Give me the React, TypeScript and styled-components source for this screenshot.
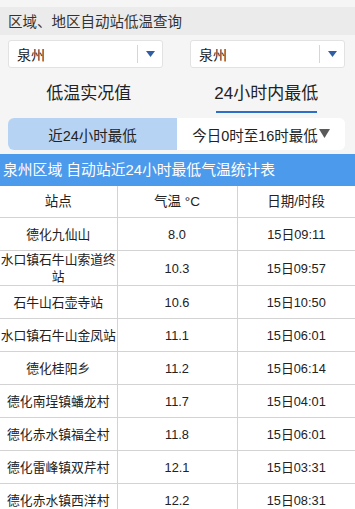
import React from "react";
import styled, { createGlobalStyle } from "styled-components";

const GlobalStyle = createGlobalStyle`
  html, body {
    margin: 0;
    padding: 0;
    background: #f5f5f5;
    font-family: "Liberation Sans", "Noto Sans CJK SC", sans-serif;
    color: #222;
  }
`;

const Page = styled.div`
  width: 355px;
  padding-top: 7px;
`;

const TitleBar = styled.div`
  height: 28px;
  line-height: 30px;
  background: #ebebeb;
  padding-left: 8px;
  font-size: 14.5px;
  color: #333;
`;

const SelectRow = styled.div`
  display: flex;
  justify-content: space-between;
  padding: 5px 10px 0 8px;
`;

const SelectBox = styled.div`
  width: 155px;
  height: 28px;
  box-sizing: border-box;
  background: #fff;
  border: 1px solid #e2e2e2;
  border-radius: 3px;
  display: flex;
  align-items: center;
  font-size: 14px;
  color: #222;
`;

const SelectText = styled.span`
  flex: 1;
  padding-left: 8px;
`;

const SelectDivider = styled.span`
  width: 1px;
  height: 18px;
  background: #d6d6d6;
`;

const SelectArrow = styled.span`
  width: 24px;
  display: flex;
  justify-content: center;
  align-items: center;
`;

const Tabs = styled.div`
  display: flex;
  height: 44px;
  margin-top: 1px;
`;

const Tab = styled.div<{ $active?: boolean }>`
  flex: 1;
  display: flex;
  align-items: center;
  justify-content: center;
  font-size: 17px;
  color: #222;
  position: relative;
  &::after {
    content: "";
    display: ${(p) => (p.$active ? "block" : "none")};
    position: absolute;
    bottom: 0;
    left: 38px;
    width: 101px;
    height: 2px;
    background: #2d6fc7;
  }
`;

const Segment = styled.div`
  display: flex;
  margin: 5px 10px 0 8px;
  height: 32px;
  border-radius: 6px;
  overflow: hidden;
  background: #fff;
`;

const SegItem = styled.div<{ $active?: boolean; $w: number }>`
  width: ${(p) => p.$w}px;
  display: flex;
  align-items: center;
  justify-content: center;
  font-size: 14.5px;
  background: ${(p) => (p.$active ? "#b7d3f4" : "#fff")};
  color: #222;
`;

const Caret = styled.svg`
  margin-left: 1px;
  margin-top: -2px;
`;

const BlueBar = styled.div`
  margin-top: 4px;
  height: 32px;
  line-height: 32px;
  background: #4c9aec;
  color: #fff;
  font-size: 14.8px;
  padding-left: 3px;
  white-space: nowrap;
`;

const Table = styled.table`
  width: 355px;
  border-collapse: collapse;
  table-layout: fixed;
  background: #fff;
`;

const Th = styled.th`
  height: 31px;
  padding: 0;
  font-weight: normal;
  font-size: 13.5px;
  line-height: 17px;
  border: 1.5px solid #d3d3d3;
  border-top: none;
  &:first-child { border-left: none; }
  &:last-child { border-right: none; }
`;

const Td = styled.td`
  height: 32px;
  padding: 0;
  text-align: center;
  font-size: 12.8px;
  line-height: 17px;
  border: 1.5px solid #d3d3d3;
  &:first-child { border-left: none; }
  &:last-child { border-right: none; }
`;

const rows = [
  ["德化九仙山", "8.0", "15日09:11"],
  ["水口镇石牛山索道终站", "10.3", "15日09:57"],
  ["石牛山石壶寺站", "10.6", "15日10:50"],
  ["水口镇石牛山金凤站", "11.1", "15日06:01"],
  ["德化桂阳乡", "11.2", "15日06:14"],
  ["德化南埕镇蟠龙村", "11.7", "15日04:01"],
  ["德化赤水镇福全村", "11.8", "15日06:01"],
  ["德化雷峰镇双芹村", "12.1", "15日03:31"],
  ["德化赤水镇西洋村", "12.2", "15日08:31"],
];

const Arrow = () => (
  <svg width="9" height="6" viewBox="0 0 9 6">
    <path d="M0 0 L9 0 L4.5 6 Z" fill="#2f5ea6" />
  </svg>
);

const Select = ({ value }: { value: string }) => (
  <SelectBox>
    <SelectText>{value}</SelectText>
    <SelectDivider />
    <SelectArrow>
      <Arrow />
    </SelectArrow>
  </SelectBox>
);

export default function App() {
  return (
    <Page>
      <GlobalStyle />
      <TitleBar>区域、地区自动站低温查询</TitleBar>
      <SelectRow>
        <Select value="泉州" />
        <Select value="泉州" />
      </SelectRow>
      <Tabs>
        <Tab>低温实况值</Tab>
        <Tab $active>24小时内最低</Tab>
      </Tabs>
      <Segment>
        <SegItem $active $w={169}>近24小时最低</SegItem>
        <SegItem $w={168}>
          今日0时至16时最低
          <Caret width="11" height="9" viewBox="0 0 11 9">
            <path d="M0 0 L11 0 L5.5 9 Z" fill="#5a5a5a" />
          </Caret>
        </SegItem>
      </Segment>
      <BlueBar>泉州区域 自动站近24小时最低气温统计表</BlueBar>
      <Table>
        <colgroup>
          <col style={{ width: 117 }} />
          <col style={{ width: 120 }} />
          <col style={{ width: 118 }} />
        </colgroup>
        <thead>
          <tr>
            <Th>站点</Th>
            <Th>气温 °C</Th>
            <Th>日期/时段</Th>
          </tr>
        </thead>
        <tbody>
          {rows.map((r) => (
            <tr key={r[0]}>
              <Td>{r[0]}</Td>
              <Td>{r[1]}</Td>
              <Td>{r[2]}</Td>
            </tr>
          ))}
        </tbody>
      </Table>
    </Page>
  );
}
